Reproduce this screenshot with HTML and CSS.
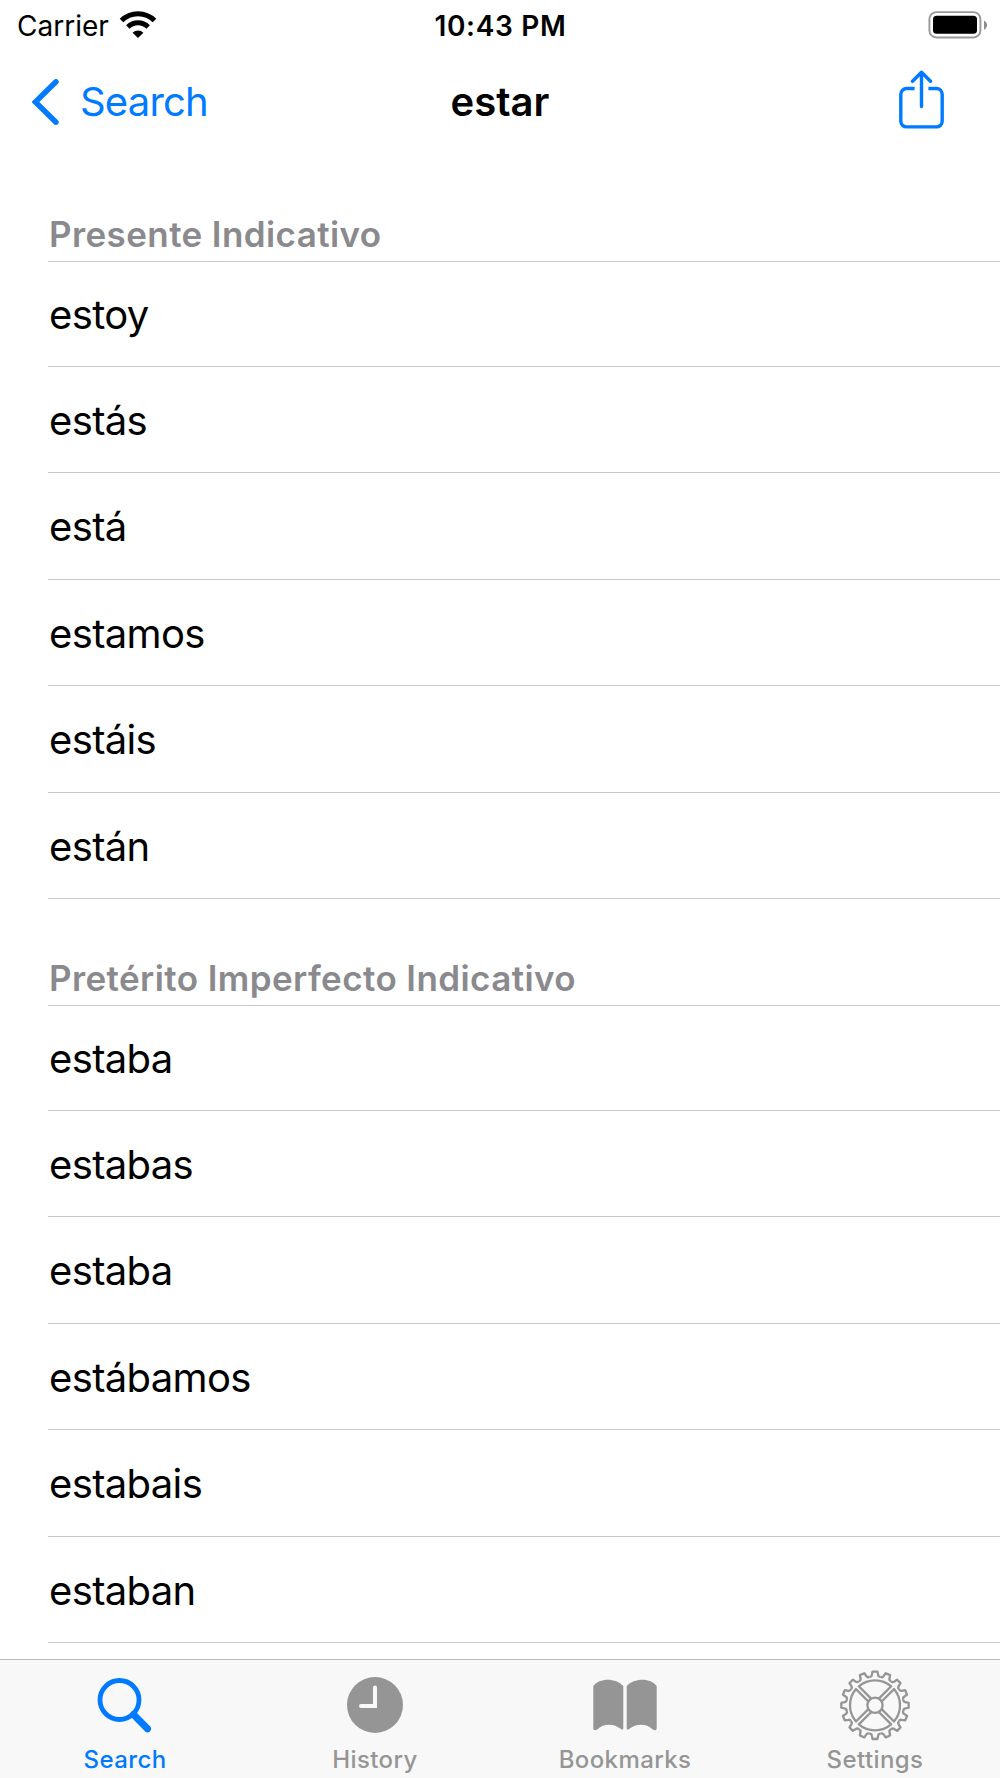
FILE: index.html
```html
<!DOCTYPE html>
<html lang="es">
<head>
  <meta charset="UTF-8" />
  <meta name="viewport" content="width=device-width, initial-scale=1.0" />
  <title>estar</title>
  <link rel="stylesheet" href="styles.css">
</head>
<body>
  <div class="screen">
    <!-- Status bar -->
    <div class="status-bar">
      <div class="status-left">
        <span class="carrier">Carrier</span>
        <svg class="wifi" width="38" height="28" viewBox="0 0 38 28">
          <path d="M2.500 9.600a23.300 23.300 0 0 1 33 0" fill="none" stroke="#000" stroke-width="5" />
          <path d="M8.800 16a14.400 14.400 0 0 1 20.400 0" fill="none" stroke="#000" stroke-width="4.800" />
          <path d="M19 27l-5.400-5.300a7.600 7.600 0 0 1 10.800 0z" />
        </svg>
      </div>
      <span class="time">10:43 PM</span>
      <div class="status-right">
        <svg width="60" height="28" viewBox="0 0 60 28">
          <rect x="1.400" y="1.100" width="51" height="25.400" rx="7" fill="none" stroke="#999" stroke-width="1.900" />
          <rect x="5" y="4.800" width="44" height="18" rx="3.600" />
          <path d="M56 9.400c4 2 4 7.300 0 9.300z" fill="#8c8c8c" />
        </svg>
      </div>
    </div>

    <!-- Navigation bar -->
    <header class="nav-bar">
      <a class="back" href="#">
        <svg width="28" height="46" viewBox="0 0 28 46">
          <path d="M24 2.800L3.400 23L24 43.200" fill="none" stroke="#007aff" stroke-width="5.400" stroke-linecap="round" />
        </svg>
        <span>Search</span>
      </a>
      <h1>estar</h1>
      <a class="share" href="#">
        <svg width="46" height="60" viewBox="0 0 46 60">
          <g fill="none" stroke="#007aff" stroke-width="3.400">
            <path d="M15.600 18.500H7.600a5.800 5.800 0 0 0-5.800 5.800v26.800a5.800 5.800 0 0 0 5.800 5.800h29.800a5.800 5.800 0 0 0 5.800-5.800V24.300a5.800 5.800 0 0 0-5.800-5.800h-8" />
            <path d="M22.500 36.500V2.500M13.500 11.300L22.500 2.300L31.500 11.300" stroke-linecap="round" stroke-linejoin="round" />
          </g>
        </svg>
      </a>
    </header>

    <!-- Conjugations -->
    <main class="list">
      <section>
        <h2>Presente Indicativo</h2>
        <ul>
          <li>estoy</li>
          <li>estás</li>
          <li>está</li>
          <li>estamos</li>
          <li>estáis</li>
          <li>están</li>
        </ul>
      </section>
      <section>
        <h2>Pretérito Imperfecto Indicativo</h2>
        <ul>
          <li>estaba</li>
          <li>estabas</li>
          <li>estaba</li>
          <li>estábamos</li>
          <li>estabais</li>
          <li>estaban</li>
        </ul>
      </section>
    </main>

    <!-- Tab bar -->
    <nav class="tab-bar">
      <a class="tab active" href="#">
        <svg width="76" height="76" viewBox="0 0 76 76">
          <g fill="none" stroke="currentColor">
            <circle cx="32.500" cy="30" r="19.500" stroke-width="4.800" />
            <path d="M46.500 44.500L60.500 58.700" stroke-width="7" stroke-linecap="round" />
          </g>
        </svg>
        <span>Search</span>
      </a>
      <a class="tab" href="#">
        <svg width="76" height="76" viewBox="0 0 76 76">
          <circle cx="38" cy="35" r="28" fill="currentColor" />
          <path d="M38 17.500V36H24" fill="none" stroke="#f8f8f8" stroke-width="4" stroke-linecap="round" />
        </svg>
        <span>History</span>
      </a>
      <a class="tab" href="#">
        <svg width="76" height="76" viewBox="0 0 76 76">
          <path d="M6.300 16C12 7.500 29 7.500 36.300 16V58.500Q36 60.500 34 59C27 53.500 17 53 10.500 59.300Q6.500 61.300 6.300 58.500z" fill="currentColor" />
          <path d="M69.700 16C64 7.500 47 7.500 39.700 16V58.500Q40 60.500 42 59C49 53.500 59 53 65.500 59.300Q69.500 61.300 69.700 58.500z" fill="currentColor" />
        </svg>
        <span>Bookmarks</span>
      </a>
      <a class="tab" href="#">
        <svg width="76" height="76" viewBox="-38 -35.300 76 76">
          <defs>
            <path id="tooth" d="M-5.660 -28.400Q-3.500 -28.300 -3.200 -30.200L-2.400 -33.700H2.400L3.200 -30.200Q3.500 -28.300 5.660 -28.400" />
            <g id="teeth">
              <use href="#tooth" />
              <use href="#tooth" transform="rotate(22.5)" />
              <use href="#tooth" transform="rotate(45)" />
              <use href="#tooth" transform="rotate(67.5)" />
            </g>
            <path id="sector" d="M4.070 -6.890L16.210 -19.030A25 25 0 0 0 -16.210 -19.030L-4.070 -6.890" />
          </defs>
          <g fill="none" stroke="currentColor" stroke-width="2.300" stroke-linejoin="round">
            <use href="#teeth" />
            <use href="#teeth" transform="rotate(90)" />
            <use href="#teeth" transform="rotate(180)" />
            <use href="#teeth" transform="rotate(270)" />
            <use href="#sector" />
            <use href="#sector" transform="rotate(90)" />
            <use href="#sector" transform="rotate(180)" />
            <use href="#sector" transform="rotate(270)" />
            <circle r="7.600" />
          </g>
        </svg>
        <span>Settings</span>
      </a>
    </nav>
  </div>
</body>
</html>
```
FILE: styles.css
```css
* {
  box-sizing: border-box;
}

body {
  margin: 0;
  font-family: Inter, "Liberation Sans", sans-serif;
  background: #fff;
  color: #000;
}

a {
  color: #007aff;
  text-decoration: none;
}

svg {
  display: block;
  flex: none;
}

.screen {
  display: flex;
  flex-direction: column;
  height: 1778px;
  overflow: hidden;
}

/* Status bar */
.status-bar {
  display: grid;
  grid-template-columns: 1fr auto 1fr;
  align-items: center;
  height: 50px;
  padding: 0 12px 0 13px;
  font-size: 28px;
}

.status-left {
  display: flex;
  align-items: center;
  gap: 10px;
  padding-left: 4px;
}

.carrier,
.time {
  padding-top: 2px;
}

.time {
  font-weight: 600;
  letter-spacing: 0.7px;
}

.status-right {
  display: flex;
  justify-content: flex-end;
}

/* Navigation bar */
.nav-bar {
  display: grid;
  grid-template-columns: 1fr auto 1fr;
  align-items: center;
  height: 105px;
  padding: 0 32px 2px;
  font-size: 40px;
}

.back {
  display: flex;
  align-items: center;
  gap: 20px;
  letter-spacing: -0.8px;
}

.nav-bar h1 {
  margin: 0;
  font-size: 40px;
  font-weight: 600;
}

.share {
  justify-self: end;
  margin-right: 23px;
  padding-bottom: 3px;
}

/* Conjugation list */
.list {
  flex: 1;
  min-height: 0;
  padding-left: 48px;
  overflow: hidden;
}

.list h2 {
  display: flex;
  align-items: flex-end;
  height: 107px;
  margin: 0;
  padding: 0 0 5px 1px;
  border-bottom: 1px solid #c8c8ca;
  color: #8a8a8e;
  font-size: 35px;
  font-weight: 600;
  letter-spacing: 0.4px;
  line-height: 43px;
}

.list ul {
  list-style: none;
  margin: 0;
  padding: 0;
}

.list li {
  height: 106.4px;
  padding-left: 1px;
  border-bottom: 1px solid #c8c8ca;
  font-size: 40px;
  letter-spacing: -0.65px;
  line-height: 108px;
}

.list li:first-child {
  height: 105px;
  line-height: 106px;
}

/* Tab bar */
.tab-bar {
  display: grid;
  grid-template-columns: repeat(4, 1fr);
  height: 119px;
  border-top: 1px solid #b8b8b8;
  background: #f8f8f8;
}

.tab {
  display: flex;
  flex-direction: column;
  align-items: center;
  padding-top: 10px;
  color: #959595;
  font-size: 24px;
  font-weight: 500;
  letter-spacing: 0.4px;
  line-height: 28px;
}

.tab.active {
  color: #007aff;
}
```
